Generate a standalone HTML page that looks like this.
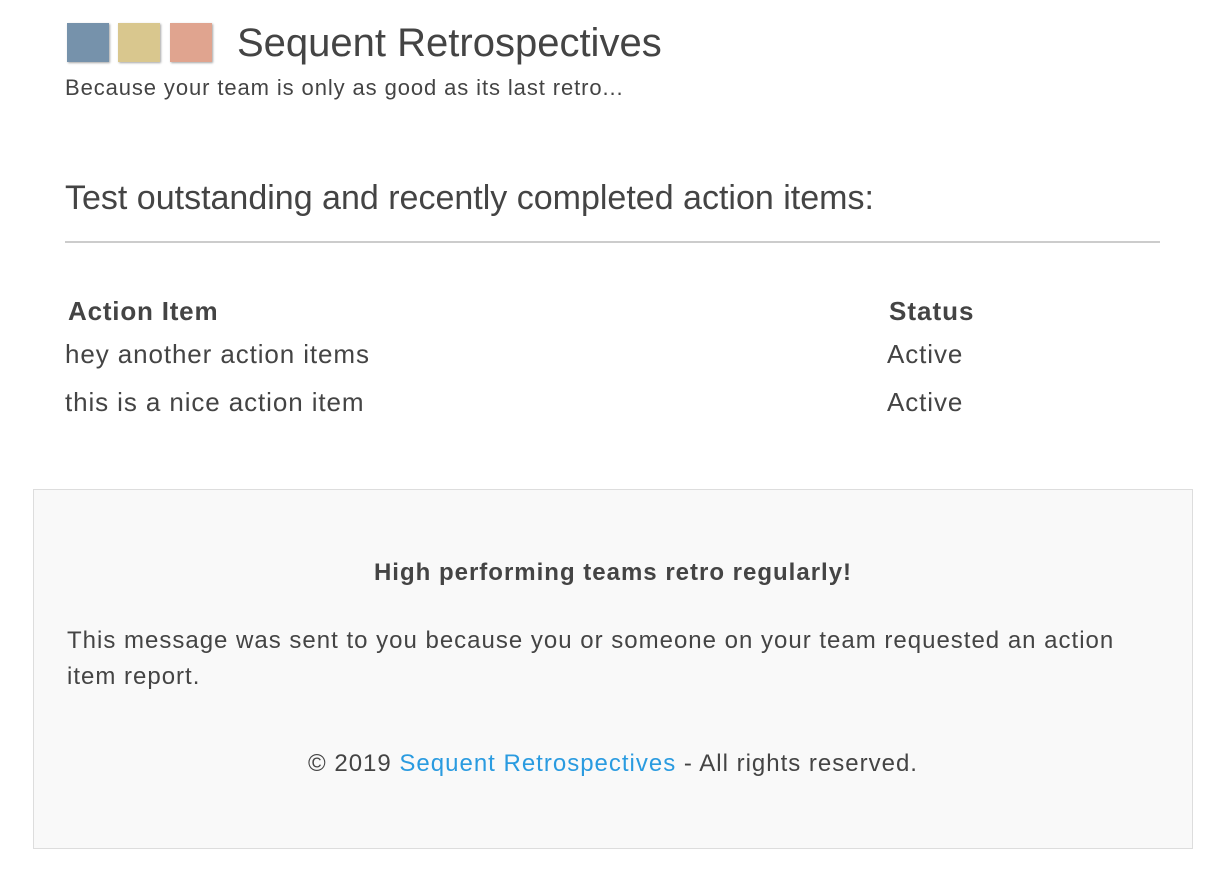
<!DOCTYPE html>
<html><head><meta charset="utf-8"><style>
body{margin:0;width:1218px;height:882px;background:#fff;font-family:"Liberation Sans",sans-serif;color:#444;position:relative;overflow:hidden}
.a{position:absolute;white-space:nowrap}
.sq{position:absolute;top:23px;width:42px;height:39px;box-shadow:1px 1px 2px rgba(0,0,0,.35)}
</style></head><body>
<div class="sq" style="left:67px;background:#7692ab"></div>
<div class="sq" style="left:118px;background:#d9c78e"></div>
<div class="sq" style="left:170px;background:#e0a48f"></div>
<div class="a" style="left:237px;top:21px;font-size:40px;color:#444">Sequent Retrospectives</div>
<div class="a" style="left:65px;top:75px;font-size:22px;letter-spacing:0.9px">Because your team is only as good as its last retro...</div>
<div class="a" style="left:65px;top:179px;font-size:34px">Test outstanding and recently completed action items:</div>
<div class="a" style="left:65px;top:241px;width:1095px;height:2px;background:#ccc"></div>
<div class="a" style="left:68px;top:296px;font-size:26px;font-weight:bold;letter-spacing:0.8px">Action Item</div>
<div class="a" style="left:889px;top:296px;font-size:26px;font-weight:bold;letter-spacing:1px">Status</div>
<div class="a" style="left:65px;top:339px;font-size:26px;letter-spacing:0.9px">hey another action items</div>
<div class="a" style="left:887px;top:339px;font-size:26px;letter-spacing:0.9px">Active</div>
<div class="a" style="left:65px;top:387px;font-size:26px;letter-spacing:0.9px">this is a nice action item</div>
<div class="a" style="left:887px;top:387px;font-size:26px;letter-spacing:0.9px">Active</div>
<div class="a" style="left:33px;top:489px;width:1158px;height:358px;background:#f9f9f9;border:1px solid #ddd"></div>
<div class="a" style="left:0;width:1226px;text-align:center;top:559px;font-size:24px;font-weight:bold;letter-spacing:1px">High performing teams retro regularly!</div>
<div class="a" style="left:67px;top:623px;font-size:24px;line-height:36px;white-space:normal;width:1100px;letter-spacing:1px">This message was sent to you because you or someone on your team requested an action item report.</div>
<div class="a" style="left:0;width:1226px;text-align:center;top:750px;font-size:24px;letter-spacing:1px">© 2019 <span style="color:#2a9be0">Sequent Retrospectives</span> - All rights reserved.</div>
</body></html>
